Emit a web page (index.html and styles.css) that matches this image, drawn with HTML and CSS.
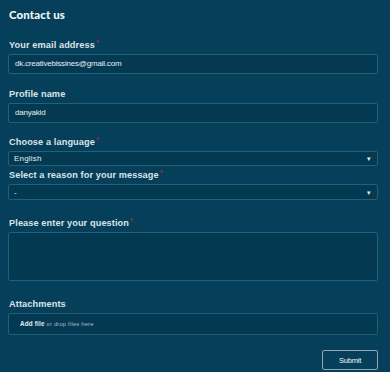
FILE: index.html
```html
<!DOCTYPE html>
<html lang="en">
<head>
<meta charset="utf-8">
<title>Contact us</title>
<link rel="stylesheet" href="styles.css">
</head>
<body>
<form class="form">
  <h1 class="title">Contact us</h1>

  <div class="field field-email">
    <label class="label">Your email address<span class="req">*</span></label>
    <div class="input">dk.creativebissines@gmail.com</div>
  </div>

  <div class="field field-profile">
    <label class="label">Profile name</label>
    <div class="input">danyakid</div>
  </div>

  <div class="field field-lang">
    <label class="label">Choose a language<span class="req">*</span></label>
    <div class="select"><span>English</span><span class="arrow">&#9662;</span></div>
  </div>

  <div class="field field-reason">
    <label class="label">Select a reason for your message<span class="req">*</span></label>
    <div class="select"><span>-</span><span class="arrow">&#9662;</span></div>
  </div>

  <div class="field field-question">
    <label class="label">Please enter your question<span class="req">*</span></label>
    <div class="textarea"></div>
  </div>

  <div class="field field-attach">
    <label class="label">Attachments</label>
    <div class="drop"><b>Add file</b> or drop files here</div>
  </div>

  <div class="actions">
    <button type="button" class="submit">Submit</button>
  </div>
</form>
</body>
</html>
```

FILE: styles.css
```css
html, body {
  margin: 0;
  padding: 0;
  background: #053f59;
}
body {
  width: 390px;
  height: 372px;
  overflow: hidden;
  font-family: "Liberation Sans", Arial, sans-serif;
  color: #dce5ea;
}
.form {
  display: flex;
  flex-direction: column;
  padding: 6px 12px 0 8px;
}
.title {
  margin: 0 0 0 1px;
  font-family: "Lato", "DejaVu Sans", sans-serif;
  font-weight: 900;
  font-size: 11.5px;
  line-height: 18px;
  color: #f2f5f7;
  letter-spacing: 0.1px;
}
.field {
  display: flex;
  flex-direction: column;
}
.label {
  display: block;
  font-size: 9.2px;
  line-height: 12px;
  height: 12px;
  font-weight: bold;
  letter-spacing: 0.1px;
  color: #dbe3e8;
  margin: 0 0 3px 1px;
}
.req {
  color: #a2283c;
  font-size: 7.5px;
  line-height: 0;
  vertical-align: 3px;
  margin-left: 1px;
}
.field-email { margin-top: 15px; }
.field-profile { margin-top: 14px; }
.field-lang { margin-top: 13px; }
.field-reason { margin-top: 3px; }
.field-question { margin-top: 17px; }
.field-attach { margin-top: 17px; }

.input, .select, .textarea, .drop {
  box-sizing: border-box;
  background: #033a52;
  border: 1px solid #245f78;
  border-radius: 2px;
  color: #e6edf1;
}
.input {
  height: 20px;
  font-size: 8px;
  line-height: 18px;
  padding: 0 6px;
  letter-spacing: -0.2px;
}
.select {
  height: 15px;
  font-size: 8px;
  line-height: 13px;
  padding: 0 6px 0 5px;
  display: flex;
  justify-content: space-between;
  align-items: center;
  letter-spacing: 0.2px;
}
.field-reason .select { height: 16px; }
.arrow {
  font-size: 7px;
  color: #e8eef2;
}
.textarea {
  height: 49px;
}
.drop {
  height: 22px;
  font-size: 5.8px;
  line-height: 20px;
  padding: 0 11px;
  color: #a9bcc6;
  letter-spacing: 0.2px;
}
.drop b {
  color: #e6edf1;
  font-size: 6.3px;
}
.actions {
  display: flex;
  justify-content: flex-end;
  margin-top: 15px;
}
.submit {
  width: 56px;
  height: 20px;
  background: #053f59;
  border: 1px solid #8ea7b3;
  border-radius: 2px;
  color: #f0f4f6;
  font-family: "Liberation Sans", Arial, sans-serif;
  font-size: 7.5px;
  padding: 0;
  letter-spacing: -0.2px;
}
```
